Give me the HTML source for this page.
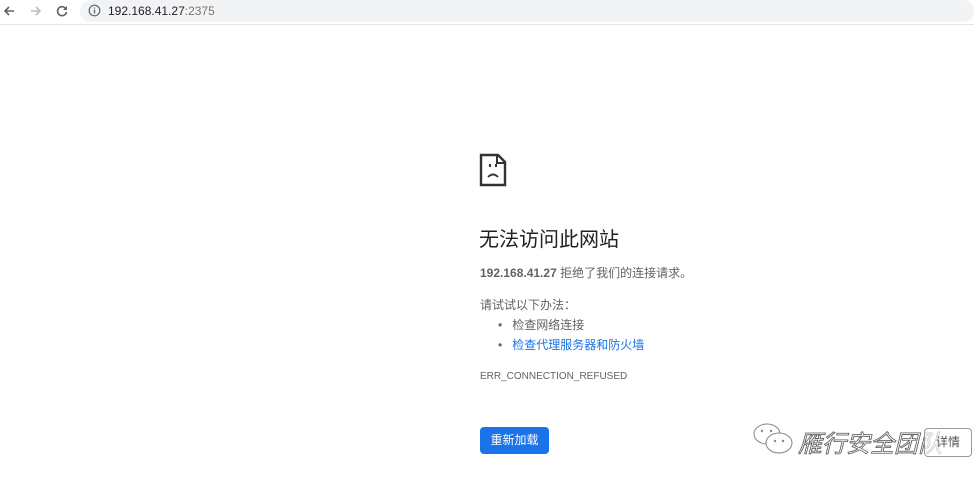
<!DOCTYPE html>
<html><head><meta charset="utf-8"><style>
body{margin:0;width:974px;height:484px;background:#fff;position:relative;overflow:hidden;font-family:"Liberation Sans","Noto Sans CJK SC",sans-serif;color:#333}
.bar{position:absolute;left:0;top:0;width:974px;height:24px;background:#fff;border-bottom:1px solid #e6e6e6}
.omni{position:absolute;left:80px;top:0;width:894px;height:22px;background:#f1f3f4;border-radius:11px}
.a{position:absolute;font-size:12px}
</style></head><body>
<div class="bar">
<svg style="position:absolute;left:2px;top:4px" width="14" height="14"><path d="M12 7H3M7 3L3 7l4 4" stroke="#5f6368" stroke-width="1.6" fill="none"/></svg>
<svg style="position:absolute;left:29px;top:4px" width="14" height="14"><path d="M2 7h9M7 3l4 4-4 4" stroke="#bbb" stroke-width="1.6" fill="none"/></svg>
<svg style="position:absolute;left:55px;top:4px" width="14" height="14"><path d="M11 5A4.5 4.5 0 1 0 11.5 8" stroke="#5f6368" stroke-width="1.6" fill="none"/><path d="M12 2v4H8z" fill="#5f6368"/></svg>
<div class="omni"></div>
<svg style="position:absolute;left:88px;top:4px" width="13" height="13"><circle cx="6.5" cy="6.5" r="5.3" stroke="#5f6368" stroke-width="1.2" fill="none"/><path d="M6.5 5.5v4M6.5 3.5v1" stroke="#5f6368" stroke-width="1.3"/></svg>
<div class="a" style="left:108px;top:4px;color:#202124">192.168.41.27<span style="color:#777">:2375</span></div>
</div>
<svg style="position:absolute;left:479px;top:153px" width="30" height="34"><path d="M2 2h17l7 7v23H2z" fill="none" stroke="#333" stroke-width="2.4"/><path d="M18 2v8h8" fill="none" stroke="#333" stroke-width="2"/><rect x="10" y="11" width="2" height="3" fill="#333"/><rect x="16" y="11" width="2" height="3" fill="#333"/><path d="M9 24q5-5 10 0" fill="none" stroke="#333" stroke-width="1.8"/></svg>
<div class="a" style="left:479px;top:223px;font-size:20px;color:#202124">无法访问此网站</div>
<div class="a" style="left:480px;top:264px;color:#5f6368"><b>192.168.41.27</b> 拒绝了我们的连接请求。</div>
<div class="a" style="left:480px;top:296px;color:#5f6368">请试试以下办法：</div>
<div class="a" style="left:498px;top:316px;color:#5f6368">•&nbsp;&nbsp;&nbsp;检查网络连接</div>
<div class="a" style="left:498px;top:336px;color:#5f6368">•&nbsp;&nbsp;&nbsp;<span style="color:#1a73e8">检查代理服务器和防火墙</span></div>
<div class="a" style="left:480px;top:371px;font-size:10px;color:#5f6368">ERR_CONNECTION_REFUSED</div>
<div style="position:absolute;left:480px;top:427px;width:69px;height:27px;background:#1a73e8;border-radius:4px;color:#fff;font-size:12px;line-height:27px;text-align:center">重新加载</div>
<svg style="position:absolute;left:752px;top:422px" width="44" height="36"><ellipse cx="15" cy="12" rx="13" ry="10" fill="#fff" stroke="#888" stroke-width="1"/><ellipse cx="27" cy="21" rx="13" ry="10" fill="#fff" stroke="#888" stroke-width="1"/><circle cx="10" cy="9" r="1.2" fill="#888"/><circle cx="19" cy="9" r="1.2" fill="#888"/><circle cx="23" cy="19" r="1.2" fill="#888"/><circle cx="31" cy="19" r="1.2" fill="#888"/></svg>
<div class="a" style="left:798px;top:424px;font-size:24px;font-style:italic;color:#fff;-webkit-text-stroke:0.8px #555;letter-spacing:0px">雁行安全团队</div>
<div style="position:absolute;left:924px;top:428px;width:46px;height:27px;border:1px solid #999;border-radius:4px;background:rgba(255,255,255,.7);font-size:12px;line-height:27px;text-align:center;color:#555">详情</div>
</body></html>
